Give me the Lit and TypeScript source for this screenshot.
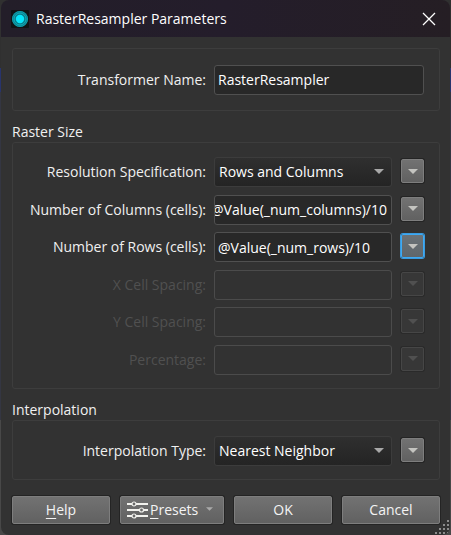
import { LitElement, html, css, svg } from "lit";
import { customElement } from "lit/decorators.js";

interface Row {
  id: string;
  label: string;
  value: string;
  kind: "select" | "text";
  disabled?: boolean;
  focused?: boolean;
}

const SIZE_ROWS: Row[] = [
  { id: "resolution", label: "Resolution Specification:", value: "Rows and Columns", kind: "select" },
  { id: "columns", label: "Number of Columns (cells):", value: "@Value(_num_columns)/10", kind: "text" },
  { id: "rows", label: "Number of Rows (cells):", value: "@Value(_num_rows)/10", kind: "text", focused: true },
  { id: "xspacing", label: "X Cell Spacing:", value: "", kind: "text", disabled: true },
  { id: "yspacing", label: "Y Cell Spacing:", value: "", kind: "text", disabled: true },
  { id: "percentage", label: "Percentage:", value: "", kind: "text", disabled: true },
];

const INTERPOLATION: Row = {
  id: "interpolation",
  label: "Interpolation Type:",
  value: "Nearest Neighbor",
  kind: "select",
};

@customElement("app-root")
export class AppRoot extends LitElement {
  static styles = css`
    :host {
      display: block;
      min-height: 100vh;
      padding: 0 1px;
      box-sizing: border-box;
      background: linear-gradient(#303030 68px, #28346c 68px, #28346c 92px, #343642 92px, #343642 420px, #484848 420px);
      font: 14px/20px "Open Sans", "Noto Sans", sans-serif;
      color: #f0f0f0;
    }
    * {
      box-sizing: border-box;
    }
    .dialog {
      position: relative;
      min-height: 100vh;
      background: #323232;
      border-radius: 8px;
      overflow: hidden;
    }
    .title {
      display: flex;
      align-items: center;
      height: 37px;
      padding: 0 10px;
      background: linear-gradient(90deg, #231e29, #241d2b 50%, #251e24);
    }
    .logo {
      width: 18px;
      height: 18px;
    }
    h1 {
      flex: 1;
      margin: 0 0 0 7px;
      font: inherit;
      color: #fff;
    }
    .close {
      display: flex;
      padding: 4px;
      border: 0;
      background: none;
    }
    form {
      padding: 11px 10px 10px 11px;
    }
    fieldset {
      display: contents;
    }
    .caption {
      float: left;
      width: 100%;
      height: 20px;
      padding: 0;
      margin-top: 11px;
    }
    .box {
      clear: both;
      display: grid;
      grid-template-columns: 193px 1fr 24px;
      column-gap: 8px;
      align-items: center;
      padding: 10px 15px 10px 0;
      border: 1px solid #3d3d3d;
      border-radius: 3px;
    }
    .box.size {
      grid-auto-rows: 38px 37px;
    }
    .box.name {
      grid-auto-rows: 41px;
    }
    .box.single {
      grid-auto-rows: 40px;
      padding-bottom: 8px;
    }
    .label {
      text-align: right;
      white-space: nowrap;
    }
    .label.off {
      color: #505050;
    }
    .text,
    .select {
      width: 100%;
      height: 30px;
      margin: 0;
      font: inherit;
      color: #fff;
      border: 1px solid #505050;
      border-radius: 3px;
      outline: 0;
    }
    .text {
      padding: 0 4px 0 0;
      text-indent: 3px;
      background: #282828;
    }
    .text:disabled {
      background: #323232;
      border-color: #4b4b4b;
    }
    .wide {
      grid-column: 2 / 4;
    }
    .combo {
      position: relative;
      display: flex;
    }
    .select {
      appearance: none;
      padding: 0 24px 0 4px;
      border-color: #3c3c3c;
      background: linear-gradient(#2f2f2f, #242424);
    }
    .combo svg {
      position: absolute;
      right: 8px;
      top: 12px;
      pointer-events: none;
      color: #a8a8a8;
    }
    .menu,
    .button {
      display: flex;
      align-items: center;
      justify-content: center;
      margin: 0;
      padding: 0;
      font: inherit;
      color: #f4f4f4;
      background: linear-gradient(#727272, #616161);
      border: 1px solid #7e7e7e;
      border-radius: 2px;
      box-shadow: 0 0 0 1px #242424;
    }
    .menu {
      justify-self: end;
      width: 23px;
      height: 24px;
      margin-bottom: 2px;
      color: #c4c4c0;
    }
    .menu.focused {
      background: linear-gradient(#6b7277, #5f666b);
      border-color: #3daaf5;
      box-shadow: 0 0 0 1px #3a9bdf;
    }
    .menu:disabled {
      color: #505050;
      background: #373737;
      border-color: #464646;
      box-shadow: 0 0 0 1px #2a2a2a;
    }
    .footer {
      display: grid;
      grid-template-columns: 1fr 104px 1fr 1fr;
      gap: 10px;
      margin-top: 16px;
    }
    .button {
      height: 28px;
    }
    .presets {
      justify-content: flex-start;
      padding-left: 6px;
      gap: 2px;
    }
    .presets .drop {
      margin: 0 0 2px 6px;
      color: #aaa;
    }
    u {
      text-underline-offset: 3px;
    }
    .grip {
      position: absolute;
      right: 0;
      bottom: 1px;
    }
  `;

  firstUpdated() {
    // The caret rests at the end of a value that is longer than its box.
    const input = this.renderRoot.querySelector<HTMLInputElement>("#columns");
    if (input) input.scrollLeft = input.scrollWidth;
  }

  private arrow(width = 10, height = 5, cls = "") {
    return html`<svg class=${cls} width=${width} height=${height} viewBox="0 0 10 5" aria-hidden="true">
      <path d="M0 0H10L5 5Z" fill="currentColor" />
    </svg>`;
  }

  private row(r: Row) {
    return html`
      <label class="label ${r.disabled ? "off" : ""}" for=${r.id}>${r.label}</label>
      ${r.kind === "select"
        ? html`<div class="combo">
            <select class="select" id=${r.id}><option>${r.value}</option></select>
            ${this.arrow()}
          </div>`
        : html`<input class="text" type="text" id=${r.id} .value=${r.value} ?disabled=${!!r.disabled} />`}
      <button class="menu ${r.focused ? "focused" : ""}" type="button" aria-label="Options" ?disabled=${!!r.disabled}>
        ${this.arrow()}
      </button>
    `;
  }

  private grip() {
    const dots = [];
    for (let y = 0; y < 4; y++)
      for (let x = 3 - y; x < 4; x++)
        dots.push(svg`<rect x=${x * 4} y=${y * 4} width="2" height="2" />`);
    return html`<svg class="grip" width="15" height="14" fill="#8c8c8c" aria-hidden="true">${dots}</svg>`;
  }

  render() {
    return html`
      <div class="dialog">
        <header class="title">
          <svg class="logo" viewBox="0 0 18 18" aria-hidden="true">
            <rect width="18" height="18" rx="1" fill="#101314" />
            <circle cx="9" cy="9" r="8" fill="#087f8b" />
            <circle cx="9" cy="9" r="7.5" fill="none" stroke="#12a5b3" stroke-width=".8" />
            <circle cx="9" cy="9" r="6" fill="none" stroke="#15b6c4" stroke-width=".8" />
            <circle cx="9" cy="9" r="4.2" fill="#06e6fb" />
          </svg>
          <h1>RasterResampler Parameters</h1>
          <button class="close" type="button" aria-label="Close">
            <svg width="14" height="14" viewBox="0 0 14 14" stroke="#fff" stroke-width="1.3">
              <path d="M1 1L13 13M13 1L1 13" />
            </svg>
          </button>
        </header>
        <form @submit=${(e: Event) => e.preventDefault()}>
          <div class="box name">
            <label class="label" for="name">Transformer Name:</label>
            <input class="text wide" type="text" id="name" .value=${"RasterResampler"} />
          </div>
          <fieldset>
            <legend class="caption">Raster Size</legend>
            <div class="box size">${SIZE_ROWS.map((r) => this.row(r))}</div>
          </fieldset>
          <fieldset>
            <legend class="caption">Interpolation</legend>
            <div class="box single">${this.row(INTERPOLATION)}</div>
          </fieldset>
          <div class="footer">
            <button class="button" type="button"><span><u>H</u>elp</span></button>
            <button class="button presets" type="button">
              <svg width="21" height="18" viewBox="0 0 21 18" fill="#686868" stroke="#f2f2ee" aria-hidden="true">
                <path d="M0 3H21M0 9H21M0 15H21" stroke-width="2" />
                <circle cx="7" cy="3" r="2" stroke-width="1.2" />
                <circle cx="14.5" cy="9" r="2" stroke-width="1.2" />
                <circle cx="7" cy="15" r="2" stroke-width="1.2" />
              </svg>
              <span><u>P</u>resets</span>
              ${this.arrow(7, 4, "drop")}
            </button>
            <button class="button" type="submit">OK</button>
            <button class="button" type="button">Cancel</button>
          </div>
        </form>
        ${this.grip()}
      </div>
    `;
  }
}
